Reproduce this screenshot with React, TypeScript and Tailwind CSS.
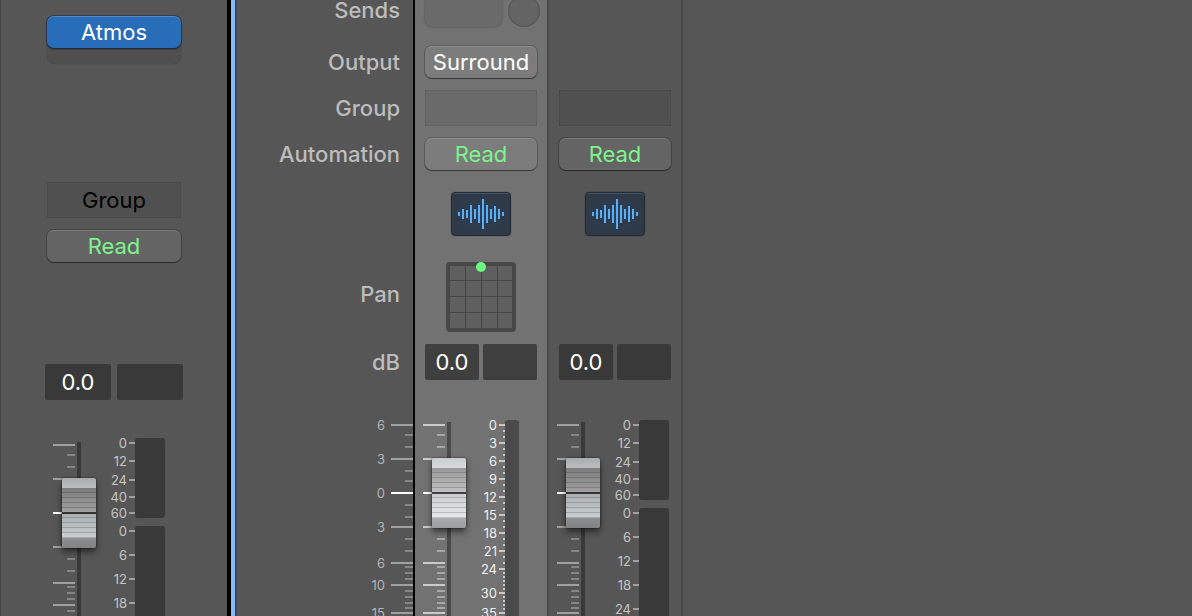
import { useState } from 'react';
import clsx from 'clsx';

type Mark = {
  y: number;
  label?: string;
};

// Fader law: long marks carry a value, short ones do not
const faderMarks: Mark[] = [
  { y: 9, label: '6' },
  { y: 19 },
  { y: 31 },
  { y: 43, label: '3' },
  { y: 55 },
  { y: 65 },
  { y: 77, label: '0' },
  { y: 89 },
  { y: 101 },
  { y: 111, label: '3' },
  { y: 123 },
  { y: 135 },
  { y: 147, label: '6' },
  { y: 151 },
  { y: 157 },
  { y: 163 },
  { y: 169, label: '10' },
  { y: 175 },
  { y: 181 },
  { y: 187 },
  { y: 192 },
  { y: 197, label: '15' },
];

const dualMeterMarks: Mark[] = [
  { y: 5, label: '0' },
  { y: 23, label: '12' },
  { y: 42, label: '24' },
  { y: 59, label: '40' },
  { y: 75, label: '60' },
  { y: 93, label: '0' },
  { y: 117, label: '6' },
  { y: 141, label: '12' },
  { y: 165, label: '18' },
  { y: 189, label: '24' },
];

const peakMeterMarks: Mark[] = [
  ...['0', '3', '6', '9', '12', '15', '18', '21'].flatMap((label, i) => [
    { y: 5 + i * 18, label },
    { y: 11 + i * 18 },
    { y: 17 + i * 18 },
  ]),
  { y: 149, label: '24' },
  ...[153, 157, 161, 165, 169].map((y) => ({ y })),
  { y: 173, label: '30' },
  ...[177, 181, 185, 189].map((y) => ({ y })),
  { y: 193, label: '35' },
];

const waveBars = [4, 10, 8, 18, 10, 18, 30, 18, 10, 16, 10, 4];

const SCALE_TEXT = 'font-[Inter,sans-serif] text-[13px]';

function FaderTicks({ bright = false }: { bright?: boolean }) {
  return (
    <svg width="22" height="210" className="shrink-0" aria-hidden="true">
      {faderMarks.map((m) => (
        <rect
          key={m.y}
          x={m.label ? 0 : 14}
          y={m.y - 1}
          width={m.label ? 22 : 8}
          height="2"
          className={clsx(
            m.label === '0'
              ? 'fill-white'
              : m.label
                ? bright
                  ? 'fill-[#cacaca]'
                  : 'fill-[#a0a0a0]'
                : bright
                  ? 'fill-[#a8a8a8]'
                  : 'fill-[#858585]',
          )}
        />
      ))}
    </svg>
  );
}

function MeterScale({ marks, bright = false }: { marks: Mark[]; bright?: boolean }) {
  return (
    <svg
      width="39"
      height="210"
      className={clsx('shrink-0 overflow-visible', SCALE_TEXT, bright ? 'fill-[#f0f0f0]' : 'fill-[#c4c4c4]')}
    >
      {marks.map((m) => (
        <g key={m.y}>
          <rect
            x={m.label ? 33 : 37}
            y={m.y - 1}
            width={m.label ? 6 : 2}
            height="2"
            className={bright ? 'fill-[#c8c8c8]' : 'fill-[#a0a0a0]'}
          />
          {m.label && (
            <text x="31" y={m.y + 5} textAnchor="end">
              {m.label}
            </text>
          )}
        </g>
      ))}
    </svg>
  );
}

function Fader({ name, bright = false }: { name: string; bright?: boolean }) {
  const [value, setValue] = useState(0);

  return (
    <input
      type="range"
      aria-label={`${name} volume`}
      min={-54}
      max={6}
      value={value}
      onChange={(e) => setValue(Number(e.target.value))}
      className={clsx(
        'relative mt-[6px] -ml-[13px] h-[430px] w-[34px] shrink-0 appearance-none [direction:rtl] [writing-mode:vertical-lr]',
        '[&::-webkit-slider-thumb]:h-[70px] [&::-webkit-slider-thumb]:w-[34px] [&::-webkit-slider-thumb]:appearance-none [&::-webkit-slider-thumb]:rounded-[2px] [&::-webkit-slider-thumb]:shadow-[0_4px_6px_rgba(0,0,0,0.5),0_0_2px_rgba(0,0,0,0.7)]',
        bright
          ? 'bg-[linear-gradient(to_right,transparent_15px,#4a4a4a_15px,#4a4a4a_19px,transparent_19px)] [&::-webkit-slider-thumb]:[background:linear-gradient(#404040,#404040)_0_34px/100%_2px_no-repeat,repeating-linear-gradient(transparent_0,transparent_4px,rgba(0,0,0,0.17)_4px,rgba(0,0,0,0.17)_5px)_0_10px/100%_50px_no-repeat,linear-gradient(#c9cdcf_0,#d8dbdc_10px,#989898_10px,#c4c4c4_35px,#c9cdcf_35px,#e4e9ea_60px,#a9acae_60px,#9b9ea0_70px)]'
          : 'bg-[linear-gradient(to_right,transparent_15px,#393939_15px,#393939_19px,transparent_19px)] [&::-webkit-slider-thumb]:[background:linear-gradient(#333,#333)_0_34px/100%_2px_no-repeat,repeating-linear-gradient(transparent_0,transparent_4px,rgba(0,0,0,0.17)_4px,rgba(0,0,0,0.17)_5px)_0_10px/100%_50px_no-repeat,linear-gradient(#a9abac_0,#bcbdbe_10px,#7c7c7c_10px,#a2a2a2_35px,#a9adb0_35px,#c9cfd0_60px,#8d9090_60px,#808282_70px)]',
      )}
    />
  );
}

function DualMeter() {
  return (
    <div className="flex w-[30px] flex-col gap-2">
      <div className="h-20 rounded-[3px] bg-[#393939]" />
      <div className="h-[320px] rounded-[3px] bg-[#393939]" />
    </div>
  );
}

function AutomationButton({ selected = false }: { selected?: boolean }) {
  return (
    <button
      className={clsx(
        'h-8 w-full rounded-[7px] text-center text-[22px] leading-8 text-[#7df48c] shadow-[0_0_0_1px_rgba(0,0,0,0.18),0_1px_1px_rgba(0,0,0,0.4),inset_0_1px_0_rgba(255,255,255,0.14)]',
        selected ? 'bg-[#7c7c7c]' : 'bg-[#646464]',
      )}
    >
      Read
    </button>
  );
}

function LevelFields({ name, selected = false }: { name: string; selected?: boolean }) {
  return (
    <>
      <input
        type="text"
        aria-label={`${name} level`}
        defaultValue="0.0"
        className={clsx(
          'h-9 min-w-0 flex-1 rounded-[2px] text-center text-[22px] text-white',
          selected ? 'bg-[#3f3f3f]' : 'bg-[#393939]',
        )}
      />
      <button
        aria-label={`${name} peak`}
        className={clsx('h-9 min-w-0 flex-1 rounded-[2px]', selected ? 'bg-[#3f3f3f]' : 'bg-[#393939]')}
      />
    </>
  );
}

function TrackIcon() {
  return (
    <button
      aria-label="Track icon"
      className="h-[44px] w-[60px] rounded-[4px] border border-[#222a36] bg-[radial-gradient(#2c3e52,#303844)] shadow-[inset_0_1px_0_rgba(120,150,190,0.25),0_0_1px_rgba(0,0,0,0.6)]"
    >
      <svg viewBox="0 0 58 42" width="58" height="42" className="fill-[#5aaef5]" aria-hidden="true">
        {waveBars.map((h, i) => (
          <rect key={i} x={6 + i * 4} y={21 - h / 2} width="2" height={h} />
        ))}
      </svg>
    </button>
  );
}

function SurroundPanner() {
  return (
    <svg width="70" height="70" role="img" aria-label="Surround panner">
      <rect width="70" height="70" rx="4" className="fill-[#474747]" />
      <rect x="4" y="4" width="62" height="62" className="fill-[#5f5f5f]" />
      <path
        d="M19.5 4v62M35.5 4v62M51.5 4v62M4 18.5h62M4 34.5h62M4 50.5h62"
        className="stroke-[#454545]"
        strokeWidth="1"
      />
      <circle cx="35" cy="5" r="5" className="fill-[#6cf984]" />
    </svg>
  );
}

function OutputStrip() {
  return (
    <section aria-label="Atmos output" className="w-[227px] shrink-0 border-l border-[#484848] bg-[#565656]">
      <div className="h-[180px] px-[46px] pt-4">
        <div className="h-12 rounded-[8px] bg-[#4f4f4f] shadow-[0_0_1px_rgba(0,0,0,0.4)]">
          <button className="h-8 w-full rounded-[7px] bg-[#286db8] text-center text-[22px] leading-8 text-white shadow-[0_0_0_1px_rgba(20,40,75,0.5),0_1px_2px_rgba(0,0,0,0.6),inset_0_1px_0_rgba(255,255,255,0.2)]">
            Atmos
          </button>
        </div>
      </div>
      <div className="flex h-10 items-center px-[46px]">
        <button className="h-9 w-full rounded-[2px] bg-[#505050] text-center text-[22px] text-black shadow-[inset_0_0_1px_rgba(0,0,0,0.5)]">
          Group
        </button>
      </div>
      <div className="flex h-[52px] items-center px-[46px]">
        <AutomationButton />
      </div>
      <div className="mt-[88px] flex h-[44px] items-center gap-[6px] px-[44px]">
        <LevelFields name="Atmos" />
      </div>
      <div className="flex items-start pt-8 pl-[52px]">
        <FaderTicks />
        <Fader name="Atmos" />
        <div className="mt-[2px] flex">
          <MeterScale marks={dualMeterMarks} />
          <DualMeter />
        </div>
      </div>
    </section>
  );
}

function RowLabels() {
  return (
    <div className="w-[180px] shrink-0 border-r-2 border-l-2 border-r-black border-l-[#40445c] bg-[#565656] text-right text-[22px] font-medium text-[#bcbcbc]">
      <div className="pr-[13px]">
        <div className="h-9 leading-5">Sends</div>
        <div className="h-[52px] leading-[52px]">Output</div>
        <div className="h-10 leading-10">Group</div>
        <div className="h-[52px] leading-[52px]">Automation</div>
        <div className="h-[68px]" />
        <div className="h-[92px] leading-[92px]">Pan</div>
        <div className="h-[44px] leading-[44px]">dB</div>
      </div>
      <div className="flex justify-end gap-[6px] pt-8">
        <svg width="30" height="210" className={clsx('overflow-visible fill-[#b4b4b4] font-normal', SCALE_TEXT)}>
          {faderMarks
            .filter((m) => m.label)
            .map((m) => (
              <text key={m.y} x="30" y={m.y + 5} textAnchor="end">
                {m.label}
              </text>
            ))}
        </svg>
        <FaderTicks />
      </div>
    </div>
  );
}

function ChannelStrip({ name, selected = false }: { name: string; selected?: boolean }) {
  return (
    <section
      aria-label={name}
      className={clsx(
        'w-[134px] shrink-0 border-r-2 border-[#484848]',
        selected ? 'bg-[#727272]' : 'bg-[#565656]',
      )}
    >
      <div className="flex h-9 items-start gap-[6px] overflow-hidden px-[10px]">
        {selected && (
          <>
            <button
              aria-label="Send slot"
              className="h-[27px] w-[77px] shrink-0 rounded-b-[8px] bg-[#6a6a6a] shadow-[0_0_2px_rgba(0,0,0,0.4)]"
            />
            <button
              aria-label="Send level"
              className="-mt-[5px] size-8 shrink-0 rounded-full bg-[#646464] shadow-[inset_0_0_2px_rgba(0,0,0,0.4)]"
            />
          </>
        )}
      </div>
      <div className="flex h-[52px] items-center px-[10px]">
        {selected && (
          <button className="h-8 w-full rounded-[7px] bg-[#7c7c7c] text-center text-[22px] leading-8 text-white shadow-[0_0_0_1px_rgba(0,0,0,0.18),0_1px_1px_rgba(0,0,0,0.4),inset_0_1px_0_rgba(255,255,255,0.14)]">
            Surround
          </button>
        )}
      </div>
      <div className="flex h-10 items-center px-[10px]">
        <button
          aria-label="Group"
          className={clsx(
            'h-9 w-full rounded-[2px] shadow-[inset_0_0_1px_rgba(0,0,0,0.6)]',
            selected ? 'bg-[#6a6a6a]' : 'bg-[#505050]',
          )}
        />
      </div>
      <div className="flex h-[52px] items-center px-[10px]">
        <AutomationButton selected={selected} />
      </div>
      <div className="flex h-[68px] items-center justify-center">
        <TrackIcon />
      </div>
      <div className="flex h-[92px] items-end justify-center pb-2">{selected && <SurroundPanner />}</div>
      <div className="flex h-[44px] items-center gap-1 px-[10px]">
        <LevelFields name={name} selected={selected} />
      </div>
      <div className="flex items-start pt-8 pl-2">
        <FaderTicks bright={selected} />
        <Fader name={name} bright={selected} />
        <div className="mt-1 flex">
          <MeterScale marks={selected ? peakMeterMarks : dualMeterMarks} bright={selected} />
          {selected ? <div className="h-[408px] w-[14px] rounded-[3px] bg-[#4a4a4a]" /> : <DualMeter />}
        </div>
      </div>
    </section>
  );
}

export default function App() {
  return (
    <main className="flex h-screen overflow-hidden bg-[#565656] font-[Inter,sans-serif]">
      <OutputStrip />
      {/* focus ring around the main mixer area */}
      <div className="flex-1 border-l-4 border-black">
        <div className="flex border-l-4 border-[#85b9f0]">
          <RowLabels />
          <ChannelStrip name="Surround track" selected />
          <ChannelStrip name="Audio track" />
        </div>
      </div>
    </main>
  );
}
